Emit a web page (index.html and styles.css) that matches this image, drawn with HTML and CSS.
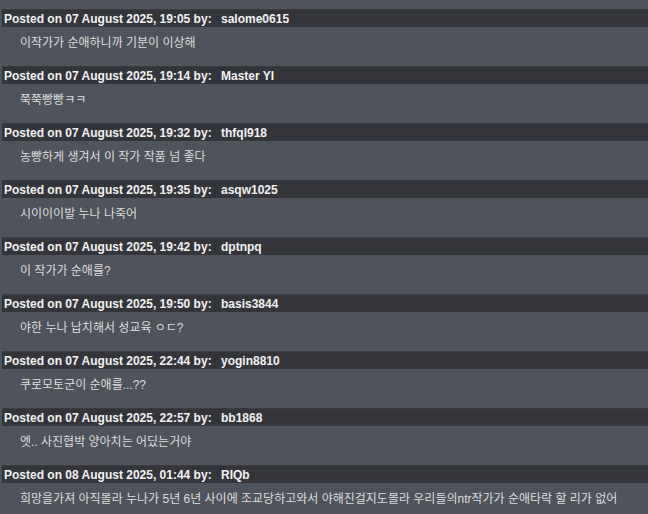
FILE: index.html
```html
<!DOCTYPE html>
<html lang="ko">
<head>
<meta charset="utf-8">
<link rel="stylesheet" href="styles.css">
</head>
<body>
<div class="comments">
  <div class="comment">
    <div class="head"><span class="meta">Posted on 07 August 2025, 19:05 by:</span><span class="user">salome0615</span></div>
    <div class="text">이작가가 순애하니까 기분이 이상해</div>
  </div>
  <div class="comment">
    <div class="head"><span class="meta">Posted on 07 August 2025, 19:14 by:</span><span class="user">Master YI</span></div>
    <div class="text">쭉쭉빵빵ㅋㅋ</div>
  </div>
  <div class="comment">
    <div class="head"><span class="meta">Posted on 07 August 2025, 19:32 by:</span><span class="user">thfql918</span></div>
    <div class="text">농빵하게 생겨서 이 작가 작품 넘 좋다</div>
  </div>
  <div class="comment">
    <div class="head"><span class="meta">Posted on 07 August 2025, 19:35 by:</span><span class="user">asqw1025</span></div>
    <div class="text">시이이이발 누나 나죽어</div>
  </div>
  <div class="comment">
    <div class="head"><span class="meta">Posted on 07 August 2025, 19:42 by:</span><span class="user">dptnpq</span></div>
    <div class="text">이 작가가 순애를?</div>
  </div>
  <div class="comment">
    <div class="head"><span class="meta">Posted on 07 August 2025, 19:50 by:</span><span class="user">basis3844</span></div>
    <div class="text">야한 누나 납치해서 성교육 ㅇㄷ?</div>
  </div>
  <div class="comment">
    <div class="head"><span class="meta">Posted on 07 August 2025, 22:44 by:</span><span class="user">yogin8810</span></div>
    <div class="text">쿠로모토군이 순애를...??</div>
  </div>
  <div class="comment">
    <div class="head"><span class="meta">Posted on 07 August 2025, 22:57 by:</span><span class="user">bb1868</span></div>
    <div class="text">엣.. 사진협박 양아치는 어딨는거야</div>
  </div>
  <div class="comment">
    <div class="head"><span class="meta">Posted on 08 August 2025, 01:44 by:</span><span class="user">RIQb</span></div>
    <div class="text">희망을가져 아직몰라 누나가 5년 6년 사이에 조교당하고와서 야해진걸지도몰라 우리들의ntr작가가 순애타락 할 리가 없어</div>
  </div>
</div>
</body>
</html>
```
FILE: styles.css
```css
html, body {
  margin: 0;
  padding: 0;
  background: #4f535c;
  overflow: hidden;
}
body {
  font-family: "Liberation Sans", Arial, "Noto Sans CJK KR", sans-serif;
  font-size: 12px;
}
.comments {
  padding-top: 9px;
}
.comment {
  display: flex;
  flex-direction: column;
}
.head {
  height: 18px;
  margin-left: 2px;
  background: #34353b;
  border-top: 1px solid #3a3b41;
  box-sizing: border-box;
  display: flex;
  align-items: center;
  padding-left: 2px;
  color: #f2f2f2;
  font-weight: bold;
  white-space: nowrap;
}
.meta {
  width: 217px;
  flex: none;
}
.user {
  color: #f2f2f2;
}
.text {
  height: 39px;
  box-sizing: border-box;
  padding: 8px 0 0 20px;
  color: #dedede;
  line-height: 16px;
  font-family: "Liberation Sans", Arial, "Noto Sans CJK KR", sans-serif;
  white-space: nowrap;
}
```
